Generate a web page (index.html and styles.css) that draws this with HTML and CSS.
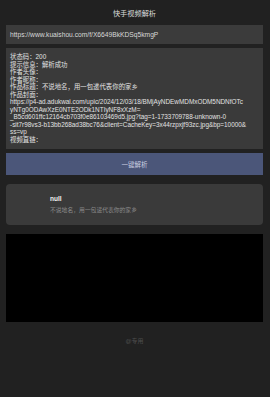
FILE: index.html
```html
<!DOCTYPE html>
<html lang="zh">
<head>
<meta charset="utf-8">
<link rel="stylesheet" href="styles.css">
</head>
<body>
<div class="page">
  <header class="title">快手视频解析</header>
  <div class="input">https://www.kuaishou.com/f/X6649BkKDSq5kmgP</div>
  <div class="result">
    状态码：200<br>
    提示信息：解析成功<br>
    作者头像：<br>
    作者昵称：<br>
    作品标题：不说地名，用一包递代表你的家乡<br>
    作品封面：<br>
    https://p4-ad.adukwai.com/upic/2024/12/03/18/BMjAyNDEwMDMxODM5NDNfOTc<br>
    yNTg0ODAwXzE0NTE2ODk1NTIyNF8xXzM=<br>
    _B5cd601ffc12164cb703f0e86103469d5.jpg?tag=1-1733709788-unknown-0<br>
    -sit7r98vs3-b13bb268ad38bc76&amp;client=CacheKey=3x44rzpxjf93zc.jpg&amp;bp=10000&amp;<br>
    ss=vp<br>
    视频直链：
  </div>
  <div class="button">一键解析</div>
  <div class="card">
    <div class="avatar"></div>
    <div class="info">
      <div class="name">null</div>
      <div class="desc">不说地名，用一包递代表你的家乡</div>
    </div>
  </div>
  <div class="video"></div>
  <footer class="footer">@专用</footer>
</div>
</body>
</html>
```

FILE: styles.css
```css
html, body {
  margin: 0;
  padding: 0;
  background: #212121;
}
body {
  font-family: "Liberation Sans", "Noto Sans CJK SC", sans-serif;
  color: #dddddd;
}
.page {
  display: flex;
  flex-direction: column;
  padding: 0 7px 0 6px;
}
.title {
  height: 25px;
  display: flex;
  align-items: center;
  justify-content: center;
  font-size: 7.2px;
  color: #dcdcdc;
}
.input {
  height: 19px;
  display: flex;
  align-items: center;
  padding: 0 4px;
  background: #3b3b3b;
  font-size: 6.7px;
  color: #d8d8d8;
  white-space: nowrap;
}
.result {
  margin-top: 4px;
  height: 101px;
  box-sizing: border-box;
  padding: 5px 4px 0 4px;
  background: #3a3a3a;
  font-size: 6.4px;
  line-height: 7.55px;
  color: #e2e2e2;
  white-space: nowrap;
  overflow: hidden;
}
.button {
  margin-top: 4px;
  height: 22px;
  display: flex;
  align-items: center;
  justify-content: center;
  background: #4b5679;
  color: #c9cde0;
  font-size: 6.5px;
}
.card {
  margin-top: 9px;
  height: 41px;
  display: flex;
  align-items: flex-start;
  background: #3a3a3a;
  border-radius: 4px;
}
.avatar {
  width: 44px;
  flex: none;
}
.info {
  padding-top: 11px;
  display: flex;
  flex-direction: column;
  gap: 3px;
}
.name {
  font-size: 6.5px;
  font-weight: bold;
  color: #f2f2f2;
}
.desc {
  font-size: 5.8px;
  color: #8a8a8a;
}
.video {
  margin-top: 9px;
  height: 88px;
  background: #000000;
}
.footer {
  margin-top: 14px;
  text-align: center;
  font-size: 6px;
  color: #4e4e4e;
}
```
